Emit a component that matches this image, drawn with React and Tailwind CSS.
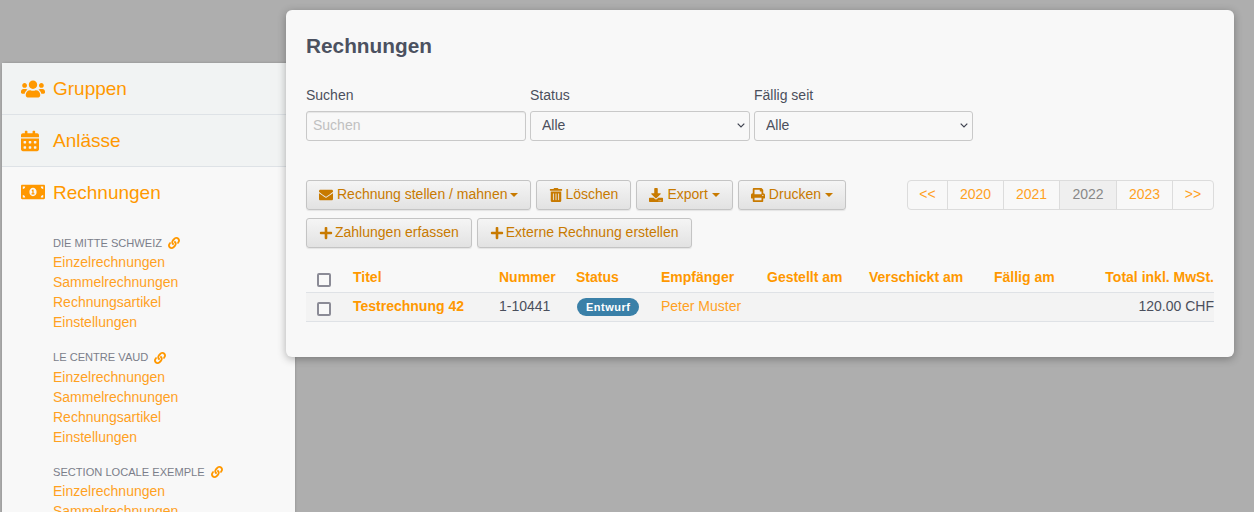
import { FaUsers, FaCalendarAlt, FaMoneyBillAlt, FaLink, FaEnvelope, FaTrashAlt, FaDownload, FaPrint, FaPlus } from 'react-icons/fa';

const groups = [
  { name: 'DIE MITTE SCHWEIZ', links: ['Einzelrechnungen', 'Sammelrechnungen', 'Rechnungsartikel', 'Einstellungen'] },
  { name: 'LE CENTRE VAUD', links: ['Einzelrechnungen', 'Sammelrechnungen', 'Rechnungsartikel', 'Einstellungen'] },
  { name: 'SECTION LOCALE EXEMPLE', links: ['Einzelrechnungen', 'Sammelrechnungen'] },
];

function NavItem({ icon, label, active }) {
  return (
    <div className={`flex items-center pl-[19px] text-[19px] text-[#ff9800] ${active ? 'h-[50px]' : 'h-[52px] border-b border-[#dee2e6] bg-[#f1f3f3]'}`}>
      <span className="flex w-[32px] text-[24px]">{icon}</span>
      <span className={active ? 'mt-[3px]' : 'mt-[1px]'}>{label}</span>
    </div>
  );
}

function Caret({ tight }) {
  return <span className={`inline-block border-x-[4px] border-t-[4px] border-x-transparent border-t-current align-middle ${tight ? 'ml-[3px]' : 'ml-[4px]'}`} />;
}

function Btn({ icon, label, caret, tight, gap = 'gap-[4px]' }) {
  return (
    <button className={`flex h-[30px] items-center rounded-[3px] border border-[#c4c4c4] bg-gradient-to-b from-[#f5f5f5] to-[#e2e2e2] px-[12px] pb-[1px] text-[14px] text-[#c87a00] shadow-[0_1px_1px_rgba(0,0,0,0.08)] ${gap}`}>
      {icon}
      <span>{label}{caret && <Caret tight={tight} />}</span>
    </button>
  );
}

function Check() {
  return <span className="inline-block h-[14px] w-[14px] translate-y-[2px] rounded-[2px] border-2 border-[#8b8b96] bg-[#f8f8f8] align-middle" />;
}

function Select() {
  return (
    <div className="relative w-full">
      <select className="h-[30px] w-full appearance-none rounded-[3px] border border-[#c9c9c9] bg-[#f8f8f8] pb-[1px] pl-[11px] text-[14px]"><option>Alle</option></select>
      <svg viewBox="0 0 8 5" className="pointer-events-none absolute right-[5px] top-[12px] h-[5px] w-[8px]" fill="none" stroke="#3f4350" strokeWidth="1.2">
        <path d="M0.7 0.7 4 4 7.3 0.7" />
      </svg>
    </div>
  );
}

const years = ['<<', '2020', '2021', '2022', '2023', '>>'];
const yearWidths = ['w-[39px]', 'w-[56px]', 'w-[56px]', 'w-[57px]', 'w-[56px]', 'w-[41px]'];
const columns = [
  ['Titel', 'w-[146px]'],
  ['Nummer', 'w-[77px]'],
  ['Status', 'w-[85px]'],
  ['Empfänger', 'w-[106px]'],
  ['Gestellt am', 'w-[102px]'],
  ['Verschickt am', 'w-[125px]'],
  ['Fällig am', 'w-[100px]'],
];

export default function App() {
  return (
    <div className="flex h-[512px] w-[1254px] items-start overflow-hidden bg-[#aeaeae] font-['Liberation_Sans',sans-serif] text-[14px] text-[#4b4f5c]">
      <aside className="ml-[2px] mt-[63px] h-[470px] w-[293px] shrink-0 rounded-tl-[4px] bg-[#f8f8f8] shadow-[0_0_3px_rgba(0,0,0,0.2)]">
        <NavItem icon={<FaUsers />} label="Gruppen" />
        <NavItem icon={<FaCalendarAlt className="w-[18px]" />} label="Anlässe" />
        <NavItem icon={<FaMoneyBillAlt />} label="Rechnungen" active />
        <div className="pl-[51px] pt-[16px]">
          {groups.map((group) => (
            <div key={group.name} className="mb-[14.5px]">
              <div className="flex h-[20px] items-center gap-[6px] text-[11.1px] text-[#7b7e8a]">
                {group.name}
                <FaLink className="text-[12px] text-[#ff9800]" />
              </div>
              {group.links.map((link) => (
                <div key={link} className="h-[20px] text-[14px] leading-[19px] text-[#ffa11f]">{link}</div>
              ))}
            </div>
          ))}
        </div>
      </aside>

      <main className="relative z-10 ml-[-9px] mt-[10px] h-[347px] w-[948px] shrink-0 rounded-[6px] bg-[#f8f8f8] px-[20px] pt-[23px] shadow-[0_2px_8px_rgba(0,0,0,0.3)]">
        <h1 className="text-[20.8px] font-bold leading-[26px] text-[#4b5160]">Rechnungen</h1>

        <div className="mt-[26px] flex">
          <label className="block w-[224px]">
            <div className="h-[26px] text-[14px] leading-[20px]">Suchen</div>
            <input placeholder="Suchen" className="h-[30px] w-[220px] rounded-[3px] border border-[#c9c9c9] bg-[#f8f8f8] px-[6px] pb-[2px] text-[14px] shadow-[inset_0_1px_1px_rgba(0,0,0,0.075)] outline-none placeholder:text-[#c0c0c0]" />
          </label>
          <label className="block w-[224px] pr-[4px]">
            <div className="h-[26px] text-[14px] leading-[20px]">Status</div>
            <Select />
          </label>
          <label className="block w-[219px]">
            <div className="h-[26px] text-[14px] leading-[20px]">Fällig seit</div>
            <Select />
          </label>
        </div>

        <div className="mt-[39px] flex items-start justify-between">
          <div className="flex w-[560px] flex-wrap gap-x-[5px] gap-y-[8px]">
            <Btn icon={<FaEnvelope />} label="Rechnung stellen / mahnen" caret tight />
            <Btn icon={<FaTrashAlt />} label="Löschen" gap="gap-[2px]" />
            <Btn icon={<FaDownload />} label="Export" caret />
            <Btn icon={<FaPrint />} label="Drucken" caret />
            <Btn icon={<FaPlus />} label="Zahlungen erfassen" gap="gap-[2px]" />
            <Btn icon={<FaPlus />} label="Externe Rechnung erstellen" gap="gap-[2px]" />
          </div>
          <div className="flex h-[30px] overflow-hidden rounded-[4px] border border-[#dcdcdc]">
            {years.map((year, i) => (
              <div key={year} className={`flex items-center justify-center pb-[1px] text-[14px] ${yearWidths[i]} ${i > 0 ? 'border-l border-[#dcdcdc]' : ''} ${year === '2022' ? 'bg-[#efefef] text-[#888888]' : 'text-[#ffa11f]'}`}>{year}</div>
            ))}
          </div>
        </div>

        <table className="mt-[15px] w-[908px] table-fixed border-collapse text-left">
          <thead>
            <tr className="h-[29px] text-[14px] text-[#ff9800]">
              <th className="w-[47px] pl-[11px] font-normal"><Check /></th>
              {columns.map(([label, width]) => (
                <th key={label} className={`${width} font-bold`}>{label}</th>
              ))}
              <th className="text-right font-bold">Total inkl. MwSt.</th>
            </tr>
          </thead>
          <tbody>
            <tr className="h-[29px] border-y border-[#dfe2e6] bg-[#f3f3f3]">
              <td className="pl-[11px]"><Check /></td>
              <td className="font-bold text-[#ff9800]">Testrechnung 42</td>
              <td>1-10441</td>
              <td>
                <span className="ml-[1px] inline-block rounded-full bg-[#3a80a8] px-[9px] text-[11px] font-bold leading-[18px] tracking-[0.5px] text-white">Entwurf</span>
              </td>
              <td className="text-[#ffa11f]">Peter Muster</td>
              <td />
              <td />
              <td />
              <td className="text-right">120.00 CHF</td>
            </tr>
          </tbody>
        </table>
      </main>
    </div>
  );
}
